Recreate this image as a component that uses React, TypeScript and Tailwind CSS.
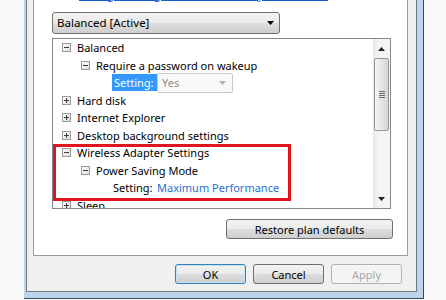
import React from 'react';

type Row =
    | { kind: 'node'; level: 0 | 1; open: boolean; label: string }
    | { kind: 'setting'; value: string; selected?: boolean };

const rows: Row[] = [
    { kind: 'node', level: 0, open: true, label: 'Balanced' },
    { kind: 'node', level: 1, open: true, label: 'Require a password on wakeup' },
    { kind: 'setting', value: 'Yes', selected: true },
    { kind: 'node', level: 0, open: false, label: 'Hard disk' },
    { kind: 'node', level: 0, open: false, label: 'Internet Explorer' },
    { kind: 'node', level: 0, open: false, label: 'Desktop background settings' },
    { kind: 'node', level: 0, open: true, label: 'Wireless Adapter Settings' },
    { kind: 'node', level: 1, open: true, label: 'Power Saving Mode' },
    { kind: 'setting', value: 'Maximum Performance' },
    { kind: 'node', level: 0, open: false, label: 'Sleep' },
];

const Expander: React.FC<{ open: boolean }> = ({ open }) => (
    <svg width="9" height="9" viewBox="0 0 9 9" className="shrink-0">
        <defs>
            <linearGradient id="exp" x1="0" y1="0" x2="1" y2="1">
                <stop offset="0" stopColor="#ffffff" />
                <stop offset="1" stopColor="#dcdcdc" />
            </linearGradient>
        </defs>
        <rect x="0.5" y="0.5" width="8" height="8" fill="url(#exp)" stroke="#9a9a9a" />
        <rect x="2" y="4" width="5" height="1" fill="#3c3c3c" />
        {!open && <rect x="4" y="2" width="1" height="5" fill="#3c3c3c" />}
    </svg>
);

// Win7 style push button
const btn =
    'h-[20px] rounded-[3px] border text-[11px] flex items-center justify-center bg-[linear-gradient(#f3f3f3_0%,#ebebeb_48%,#dddddd_52%,#cfcfcf_100%)]';

const TreeRow: React.FC<{ row: Row }> = ({ row }) => {
    if (row.kind === 'node') {
        return (
            <div className={`h-[17.5px] flex items-center gap-[6px] ${row.level === 0 ? 'pl-[9px]' : 'pl-[28px]'}`}>
                <Expander open={row.open} />
                <span className="whitespace-nowrap">{row.label}</span>
            </div>
        );
    }
    if (row.selected) {
        return (
            <div className="h-[17.5px] flex items-center pl-[59px]">
                <span className="w-[45px] h-[17px] bg-[#3399ff] text-white pl-[2px] flex items-center">Setting:</span>
                <span className="w-[76px] h-[20px] border border-[#c9c9c9] rounded-[2px] bg-[#f9f9f9] flex items-center pl-[4px] pr-[6px] text-[#8c8c8c]">
                    <span className="flex-1">{row.value}</span>
                    <svg width="7" height="4" viewBox="0 0 7 4">
                        <path d="M0 0h7L3.5 4z" fill="#b0b0b0" />
                    </svg>
                </span>
            </div>
        );
    }
    return (
        <div className="h-[17.5px] flex items-center pl-[60px]">
            <span className="w-[44px]">Setting:</span>
            <span className="text-[#2b6fcc] whitespace-nowrap">{row.value}</span>
        </div>
    );
};

const Scrollbar: React.FC = () => (
    <div className="w-[17px] shrink-0 flex flex-col items-center bg-[linear-gradient(90deg,#e6e6e6,#f4f4f4_30%,#f4f4f4)]">
        <div className="h-[19px] w-full flex items-center justify-center">
            <svg width="7" height="4" viewBox="0 0 7 4">
                <path d="M3.5 0L7 4H0z" fill="#222" />
            </svg>
        </div>
        <div className="w-[15px] h-[73px] rounded-[2px] border border-[#989898] bg-[linear-gradient(90deg,#f5f5f5,#e6e6e6_50%,#d4d4d4)] flex flex-col items-center justify-center gap-[1px]">
            <span className="w-[6px] h-[1px] bg-[#6c6c6c]" />
            <span className="w-[6px] h-[1px] bg-[#6c6c6c]" />
            <span className="w-[6px] h-[1px] bg-[#6c6c6c]" />
            <span className="w-[6px] h-[1px] bg-[#6c6c6c]" />
        </div>
        <div className="flex-1" />
        <div className="h-[19px] w-full flex items-center justify-center">
            <svg width="7" height="4" viewBox="0 0 7 4">
                <path d="M0 0h7L3.5 4z" fill="#222" />
            </svg>
        </div>
    </div>
);

export default function App() {
    return (
        <div className="w-[446px] h-[300px] overflow-hidden bg-[#fafafa] font-['Noto_Sans',sans-serif] text-[11px] text-black leading-none">
            {/* window frame */}
            <div className="ml-[24px] w-[400px] -mt-[20px] bg-[#bcd4ec] border-r border-b border-[#3f4852] pl-[2px] pr-[6px] pb-[6px]">
                <div className="bg-[#f0f0f0] border-l border-r border-b border-[#6e7985] pl-[6px] pr-[8px] pb-[7px]">
                    {/* tab page */}
                    <div className="bg-white border-l border-r border-b border-[#9c9c9c] pl-[18px] pt-[2px] pb-[16px]">
                        <div className="h-[18px] flex items-end gap-[10px] pl-[10px]">
                            <span className="w-[7px] h-[12px] rounded-full bg-[#a0a0a0]" />
                            <span className="text-[#1a5fd0] text-[11.5px] underline whitespace-nowrap">
                                Change settings that are currently unavailable
                            </span>
                        </div>

                        <div className="mt-[12px] w-[228px] h-[22px] rounded-[3px] border border-[#707070] flex items-center pl-[4px] pr-[5px] bg-[linear-gradient(#f3f3f3_0%,#ebebeb_48%,#dddddd_52%,#cfcfcf_100%)]">
                            <span className="flex-1 text-[11.5px]">Balanced [Active]</span>
                            <svg width="7" height="4" viewBox="0 0 7 4">
                                <path d="M0 0h7L3.5 4z" fill="#000" />
                            </svg>
                        </div>

                        <div className="relative mt-[4px] w-[339px] h-[171px] border border-[#828790] flex">
                            <div className="flex-1 overflow-hidden">
                                {rows.map((r, i) => (
                                    <TreeRow key={i} row={r} />
                                ))}
                            </div>
                            <Scrollbar />
                            {/* annotation box */}
                            <div className="absolute left-[0px] top-[105px] w-[238px] h-[57px] border-[3px] border-[#e0161f]" />
                        </div>

                        <div className="mt-[10px] w-[341px] flex justify-end">
                            <button className={`${btn} w-[167px] border-[#707070]`}>Restore plan defaults</button>
                        </div>
                    </div>

                    <div className="mt-[8px] flex justify-end gap-[7px] pr-[6px]">
                        <button className={`${btn} w-[71px] border-[#3c7fb1] shadow-[inset_0_0_0_1px_#bfe4f7]`}>OK</button>
                        <button className={`${btn} w-[71px] border-[#707070]`}>Cancel</button>
                        <button className="h-[20px] w-[71px] rounded-[3px] border border-[#adb2b5] bg-[#f4f4f4] text-[#a8a8a8] text-[11px] flex items-center justify-center">
                            Apply
                        </button>
                    </div>
                </div>
            </div>
        </div>
    );
}
